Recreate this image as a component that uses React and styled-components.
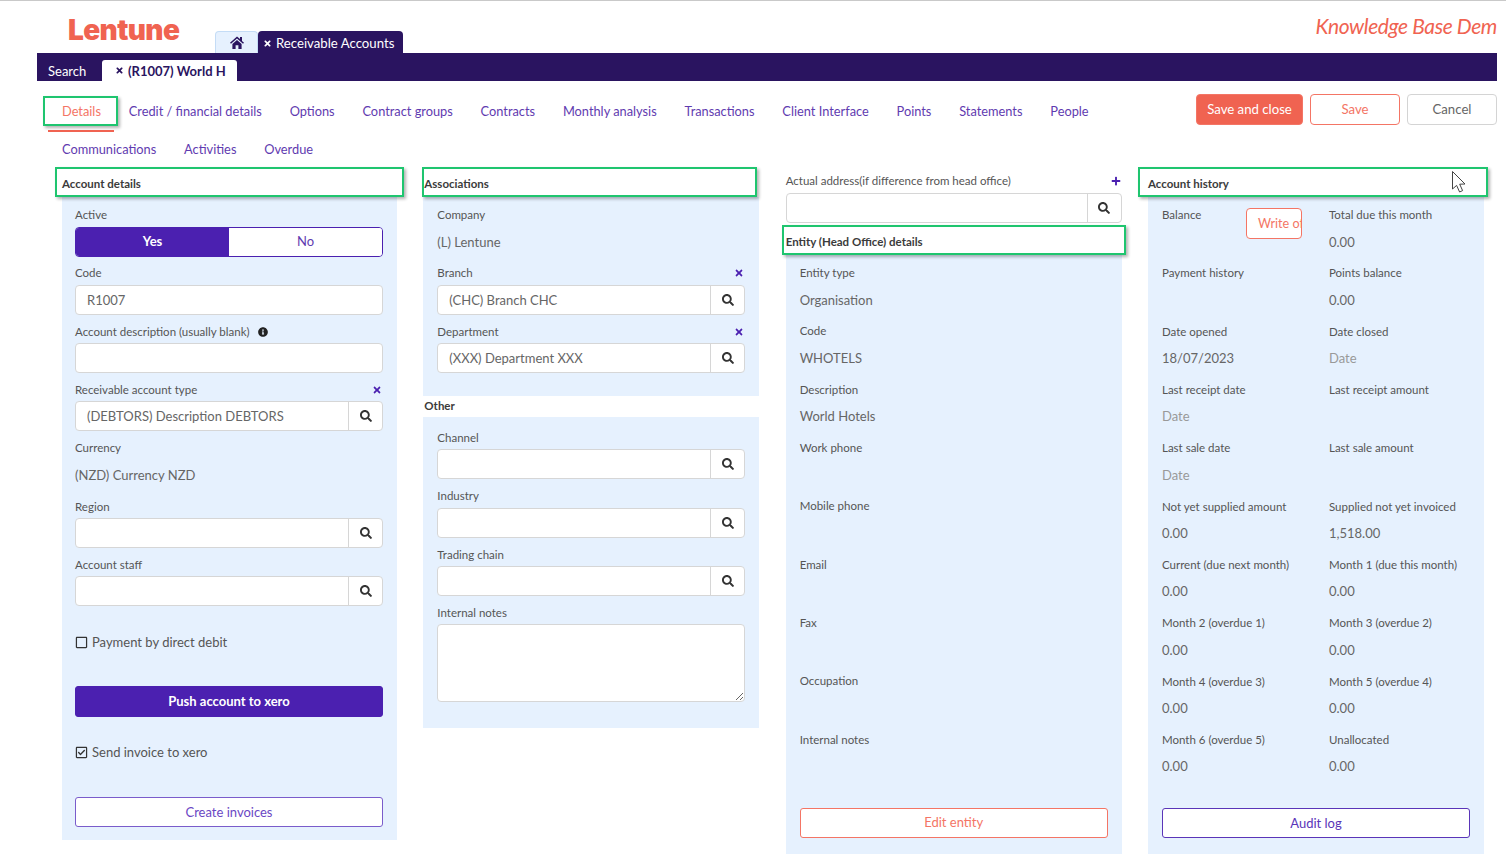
import React from 'react';
import styled, { createGlobalStyle } from 'styled-components';
import { FaTimes, FaSearch, FaPlus, FaInfoCircle, FaRegSquare, FaRegCheckSquare } from 'react-icons/fa';

const GlobalStyle = createGlobalStyle`
  html, body {
    margin: 0;
    height: 854px;
    overflow: hidden;
    background: #fff;
  }
  * { box-sizing: border-box; }
  body {
    font-family: Lato, "Noto Sans", sans-serif;
    font-size: 12px;
    color: #555;
  }
`;

const Page = styled.div`
  display: flex;
  flex-direction: column;
  width: 1506px;
  height: 854px;
  overflow: hidden;
  border-top: 1px solid #c9c9c9;
  padding-right: 9px;
`;

const Header = styled.header`
  display: flex;
  flex: none;
  align-items: flex-end;
  height: 52px;
  padding-left: 68px;
  overflow: hidden;
`;

const Logo = styled.div`
  width: 147px;
  align-self: flex-start;
  margin-top: 13px;
  font-family: Inter, sans-serif;
  font-size: 28px;
  line-height: 32px;
  font-weight: 900;
  letter-spacing: -0.6px;
  color: #f06351;
`;

const HomeTab = styled.div`
  display: flex;
  align-items: center;
  justify-content: center;
  width: 43px;
  height: 22px;
  background: #e6f1fe;
  color: #2a1460;
  border: 1px solid #c4dcf6;
  border-bottom: 0;
  border-radius: 4px 4px 0 0;
`;

const ModuleTab = styled.div`
  display: flex;
  align-items: center;
  gap: 4px;
  height: 22px;
  padding: 2px 9px 0 5px;
  background: #2a1460;
  color: #fff;
  font-size: 13.2px;
  border-radius: 4px 4px 0 0;
  svg { font-size: 9px; }
`;

const Tagline = styled.div`
  flex: 1;
  align-self: flex-start;
  margin-top: 10px;
  text-align: right;
  white-space: nowrap;
  font-style: italic;
  font-size: 21px;
  letter-spacing: -0.4px;
  line-height: 30px;
  color: #f06351;
`;

const RecordBar = styled.div`
  display: flex;
  flex: none;
  align-items: flex-end;
  height: 28px;
  margin-left: 37px;
  padding-left: 11px;
  background: #2a1460;
`;

const SearchLink = styled.div`
  width: 39px;
  height: 21px;
  margin-right: 15px;
  line-height: 22px;
  font-size: 13px;
  color: #fff;
`;

const RecordTab = styled.div`
  display: flex;
  align-items: center;
  gap: 4px;
  height: 21px;
  width: 135px;
  padding: 0 0 0 13px;
  background: #fff;
  color: #2a1460;
  font-size: 13px;
  font-weight: 700;
  border-radius: 3px 3px 0 0;
  svg { font-size: 9px; }
`;

const Toolbar = styled.div`
  display: flex;
  flex: none;
  justify-content: space-between;
  align-items: flex-start;
  margin-top: 13px;
  padding-left: 62px;
`;

const TabColumn = styled.div`
  padding-top: 2px;
`;

const TabRow = styled.nav`
  display: flex;
  gap: 27.8px;
  height: 30px;
  & + & { margin-top: 8px; }
`;

const Tab = styled.a`
  position: relative;
  line-height: 31px;
  font-size: 12.8px;
  white-space: nowrap;
  color: ${({ $active }) => ($active ? '#f47565' : '#5f3bb0')};

  ${({ $active }) => $active && `
    &::before {
      content: "";
      position: absolute;
      inset: 0 -17px 0 -19px;
      border: 2px solid #1fc56f;
      box-shadow: 2px 2px 3px rgba(0, 0, 0, 0.3);
    }
    &::after {
      content: "";
      position: absolute;
      left: -14px;
      right: -13px;
      bottom: -6px;
      height: 2px;
      background: #f06351;
    }
  `}
`;

const Actions = styled.div`
  display: flex;
  gap: 7px;
`;

const ActionButton = styled.button`
  width: ${({ $wide }) => ($wide ? '107px' : '90px')};
  height: 31px;
  padding: 0 0 2px;
  font: inherit;
  font-size: 13.2px;
  border-radius: 4px;
  border: 1px solid ${({ $variant }) => ($variant === 'plain' ? '#d4d4d4' : '#f47565')};
  background: ${({ $variant }) => ($variant === 'solid' ? '#f06351' : '#fff')};
  color: ${({ $variant }) => ({ solid: '#fff', outline: '#f47565', plain: '#666' }[$variant])};
`;

const Columns = styled.main`
  display: grid;
  flex: 1;
  min-height: 0;
  grid-template-columns: 335px 336px 336px 336px;
  column-gap: 26.33px;
  align-items: stretch;
  margin-top: 3px;
  padding-left: 62px;
`;

const Column = styled.section`
  display: flex;
  flex-direction: column;
  align-self: ${({ $short }) => ($short ? 'start' : 'stretch')};
  min-width: 0;
`;

const SectionHeading = styled.h2`
  position: relative;
  z-index: 1;
  flex: none;
  height: 30px;
  margin: 0 ${({ $right }) => $right}px 0 ${({ $left }) => $left}px;
  padding-left: ${({ $left }) => -$left - 2}px;
  line-height: 30px;
  font-size: 11.5px;
  font-weight: 700;
  color: #3b3b3b;
  background: #fff;
  border: 2px solid #1fc56f;
  box-shadow: 2px 2px 3px rgba(0, 0, 0, 0.3);
`;

const Pointer = styled.svg`
  position: absolute;
  left: 311px;
  top: 1px;
`;

const Panel = styled.div`
  flex: ${({ $fill }) => ($fill ? 1 : 'none')};
  padding: ${({ $top }) => $top || 9}px 14px ${({ $bottom }) => $bottom || 0}px ${({ $first }) => ($first ? 13 : 14)}px;
  background: #e6f1fe;
`;

const SubHeading = styled.h3`
  margin: 0;
  height: 21px;
  padding-left: 1px;
  line-height: 20px;
  font-size: 11.5px;
  font-weight: 700;
  color: #3b3b3b;
`;

const FieldBox = styled.div`
  height: ${({ $tall }) => ($tall ? 'auto' : '58.33px')};
`;

const LabelRow = styled.div`
  display: flex;
  align-items: center;
  height: 18px;
  margin-bottom: 2.5px;
  line-height: 18px;
  font-size: 11.5px;
  color: #555;
  white-space: nowrap;
`;

const LabelIcon = styled.span`
  display: inline-flex;
  margin-left: ${({ $end }) => ($end ? 'auto' : '8px')};
  margin-right: ${({ $end }) => ($end ? '1px' : '0')};
  font-size: 10px;
  color: ${({ $end }) => ($end ? '#4b20b0' : '#222')};
`;

const TextInput = styled.input`
  display: block;
  width: 100%;
  height: 30px;
  padding: 0 11px;
  font: inherit;
  font-size: 13px;
  color: #666;
  background: #fff;
  border: 1px solid #d6d6d6;
  border-radius: 4px;
  outline: 0;
`;

const InputGroup = styled.div`
  display: flex;
  height: 30px;
  background: #fff;
  border: 1px solid #d6d6d6;
  border-radius: 4px;
`;

const GroupInput = styled(TextInput)`
  flex: 1;
  min-width: 0;
  height: 28px;
  border: 0;
  background: transparent;
`;

const SearchButton = styled.div`
  display: flex;
  align-items: center;
  justify-content: center;
  width: 34px;
  font-size: 12px;
  color: #333;
  border-left: 1px solid #d6d6d6;
`;

const Value = styled.div`
  height: 30px;
  line-height: 30px;
  font-size: 13px;
  color: ${({ $muted }) => ($muted ? '#999' : '#666')};
`;

const Toggle = styled.div`
  display: flex;
  height: 30px;
  border: 1px solid #4b20b0;
  border-radius: 4px;
  overflow: hidden;
`;

const ToggleOption = styled.div`
  flex: 1;
  text-align: center;
  line-height: 26px;
  font-size: 13px;
  font-weight: ${({ $on }) => ($on ? 700 : 400)};
  color: ${({ $on }) => ($on ? '#fff' : '#5f3bb0')};
  background: ${({ $on }) => ($on ? '#4b20b0' : '#fff')};
`;

const CheckRow = styled.label`
  display: flex;
  align-items: center;
  gap: 4px;
  height: 20px;
  margin-top: ${({ $gap }) => $gap}px;
  font-size: 13px;
  color: #555;
  svg { font-size: 13px; color: #333; }
`;

const WideButton = styled.button`
  display: block;
  width: 100%;
  height: ${({ $solid }) => ($solid ? 31 : 30)}px;
  margin-top: ${({ $gap }) => $gap}px;
  padding: 0 0 1px;
  font: inherit;
  font-size: 13px;
  font-weight: ${({ $solid }) => ($solid ? 700 : 400)};
  border-radius: 3px;
  border: 1px solid ${({ $color }) => $color};
  background: ${({ $solid, $color }) => ($solid ? $color : '#fff')};
  color: ${({ $solid, $text }) => ($solid ? '#fff' : $text)};
`;

const NotesBox = styled.textarea`
  display: block;
  width: 100%;
  height: 78px;
  padding: 6px 11px;
  font: inherit;
  background: #fff;
  border: 1px solid #d6d6d6;
  border-radius: 4px;
  outline: 0;
`;

const AddressBlock = styled.div`
  flex: none;
  height: 53px;
  margin-top: 5px;
`;

const HistoryGrid = styled.div`
  display: grid;
  grid-template-columns: 167px 141px;
`;

const BalanceCell = styled.div`
  display: flex;
  align-items: flex-start;
  height: 58.33px;
`;

const BalanceLabel = styled.div`
  width: 84px;
  line-height: 18px;
  font-size: 11.5px;
  color: #555;
`;

const WriteOff = styled.div`
  width: 56px;
  height: 31px;
  margin-top: 2px;
  padding-left: 11px;
  overflow: hidden;
  white-space: nowrap;
  line-height: 29px;
  font-size: 12.6px;
  color: #f47565;
  background: #fff;
  border: 1px solid #f47565;
  border-radius: 4px;
`;

const firstRowTabs = ['Credit / financial details', 'Options', 'Contract groups', 'Contracts', 'Monthly analysis', 'Transactions', 'Client Interface', 'Points', 'Statements', 'People'];

const entityRows = [
  ['Entity type', 'Organisation'],
  ['Code', 'WHOTELS'],
  ['Description', 'World Hotels'],
  ['Work phone', ''],
  ['Mobile phone', ''],
  ['Email', ''],
  ['Fax', ''],
  ['Occupation', ''],
  ['Internal notes', ''],
];

const historyRows = [
  ['Total due this month', '0.00'],
  ['Payment history', ''],
  ['Points balance', '0.00'],
  ['Date opened', '18/07/2023'],
  ['Date closed', 'Date', true],
  ['Last receipt date', 'Date', true],
  ['Last receipt amount', ''],
  ['Last sale date', 'Date', true],
  ['Last sale amount', ''],
  ['Not yet supplied amount', '0.00'],
  ['Supplied not yet invoiced', '1,518.00'],
  ['Current (due next month)', '0.00'],
  ['Month 1 (due this month)', '0.00'],
  ['Month 2 (overdue 1)', '0.00'],
  ['Month 3 (overdue 2)', '0.00'],
  ['Month 4 (overdue 3)', '0.00'],
  ['Month 5 (overdue 4)', '0.00'],
  ['Month 6 (overdue 5)', '0.00'],
  ['Unallocated', '0.00'],
];

const HomeIcon = () => (
  <svg width="14" height="13" viewBox="0 0 14 13" fill="currentColor">
    <path d="M7 0.5 L10 3.1 V1 H12 V4.9 L14 6.7 L13 7.8 L7 2.6 L1 7.8 L0 6.7 Z" />
    <path d="M2.4 8 L7 4 L11.6 8 V13 H8.4 V9.2 H5.6 V13 H2.4 Z" />
  </svg>
);

const Label = ({ text, clear, add, info }) => (
  <LabelRow>
    {text}
    {info && <LabelIcon><FaInfoCircle /></LabelIcon>}
    {clear && <LabelIcon $end><FaTimes /></LabelIcon>}
    {add && <LabelIcon $end><FaPlus /></LabelIcon>}
  </LabelRow>
);

const LookupInput = ({ value = '' }) => (
  <InputGroup>
    <GroupInput readOnly value={value} />
    <SearchButton><FaSearch /></SearchButton>
  </InputGroup>
);

const Lookup = ({ label, value, clear }) => (
  <FieldBox>
    <Label text={label} clear={clear} />
    <LookupInput value={value} />
  </FieldBox>
);

const Plain = ({ label, value, info }) => (
  <FieldBox>
    <Label text={label} info={info} />
    <TextInput readOnly value={value} />
  </FieldBox>
);

const Display = ({ label, value, muted }) => (
  <FieldBox>
    <Label text={label} />
    {value && <Value $muted={muted}>{value}</Value>}
  </FieldBox>
);

export default function App() {
  return (
    <Page>
      <GlobalStyle />
      <Header>
        <Logo>Lentune</Logo>
        <HomeTab><HomeIcon /></HomeTab>
        <ModuleTab><FaTimes />Receivable Accounts</ModuleTab>
        <Tagline>Knowledge Base Dem</Tagline>
      </Header>
      <RecordBar>
        <SearchLink>Search</SearchLink>
        <RecordTab><FaTimes />(R1007) World H</RecordTab>
      </RecordBar>

      <Toolbar>
        <TabColumn>
          <TabRow>
            <Tab $active>Details</Tab>
            {firstRowTabs.map(t => <Tab key={t}>{t}</Tab>)}
          </TabRow>
          <TabRow>
            <Tab>Communications</Tab>
            <Tab>Activities</Tab>
            <Tab>Overdue</Tab>
          </TabRow>
        </TabColumn>
        <Actions>
          <ActionButton $wide $variant="solid">Save and close</ActionButton>
          <ActionButton $variant="outline">Save</ActionButton>
          <ActionButton $variant="plain">Cancel</ActionButton>
        </Actions>
      </Toolbar>

      <Columns>
        <Column $short>
          <SectionHeading $left={-7} $right={-7}>Account details</SectionHeading>
          <Panel $first $bottom={13}>
            <FieldBox>
              <Label text="Active" />
              <Toggle>
                <ToggleOption $on>Yes</ToggleOption>
                <ToggleOption>No</ToggleOption>
              </Toggle>
            </FieldBox>
            <Plain label="Code" value="R1007" />
            <Plain label="Account description (usually blank)" value="" info />
            <Lookup label="Receivable account type" value="(DEBTORS) Description DEBTORS" clear />
            <Display label="Currency" value="(NZD) Currency NZD" />
            <Lookup label="Region" />
            <Lookup label="Account staff" />
            <CheckRow $gap={18}><FaRegSquare />Payment by direct debit</CheckRow>
            <WideButton $solid $gap={34} $color="#4b20b0">Push account to xero</WideButton>
            <CheckRow $gap={25}><FaRegCheckSquare />Send invoice to xero</CheckRow>
            <WideButton $gap={35} $color="#7a5ccb" $text="#6a47c4">Create invoices</WideButton>
          </Panel>
        </Column>

        <Column $short>
          <SectionHeading $left={-1} $right={2}>Associations</SectionHeading>
          <Panel $bottom={15}>
            <Display label="Company" value="(L) Lentune" />
            <Lookup label="Branch" value="(CHC) Branch CHC" clear />
            <Lookup label="Department" value="(XXX) Department XXX" clear />
          </Panel>
          <SubHeading>Other</SubHeading>
          <Panel $top={12} $bottom={26}>
            <Lookup label="Channel" />
            <Lookup label="Industry" />
            <Lookup label="Trading chain" />
            <FieldBox $tall>
              <Label text="Internal notes" />
              <NotesBox readOnly />
            </FieldBox>
          </Panel>
        </Column>

        <Column>
          <AddressBlock>
            <Label text="Actual address(if difference from head office)" add />
            <LookupInput />
          </AddressBlock>
          <SectionHeading $left={-4} $right={-4}>Entity (Head Office) details</SectionHeading>
          <Panel $fill>
            {entityRows.map(([label, value]) => <Display key={label} label={label} value={value} />)}
            <WideButton $gap={19} $color="#f47565" $text="#f47565">Edit entity</WideButton>
          </Panel>
        </Column>

        <Column>
          <SectionHeading $left={-10} $right={-4}>
            Account history
            <Pointer width="16" height="24" viewBox="0 0 16 24">
              <path d="M1.5 1.5 L1.5 19 L5.6 15.4 L8.6 22 L11.6 20.6 L8.7 14.2 L14 14 Z" fill="#fff" stroke="#444" strokeWidth="1" />
            </Pointer>
          </SectionHeading>
          <Panel $fill>
            <HistoryGrid>
              <BalanceCell>
                <BalanceLabel>Balance</BalanceLabel>
                <WriteOff>Write off</WriteOff>
              </BalanceCell>
              {historyRows.map(([label, value, muted]) => <Display key={label} label={label} value={value} muted={muted} />)}
            </HistoryGrid>
            <WideButton $gap={19} $color="#5a35b8" $text="#5a35b8">Audit log</WideButton>
          </Panel>
        </Column>
      </Columns>
    </Page>
  );
}
